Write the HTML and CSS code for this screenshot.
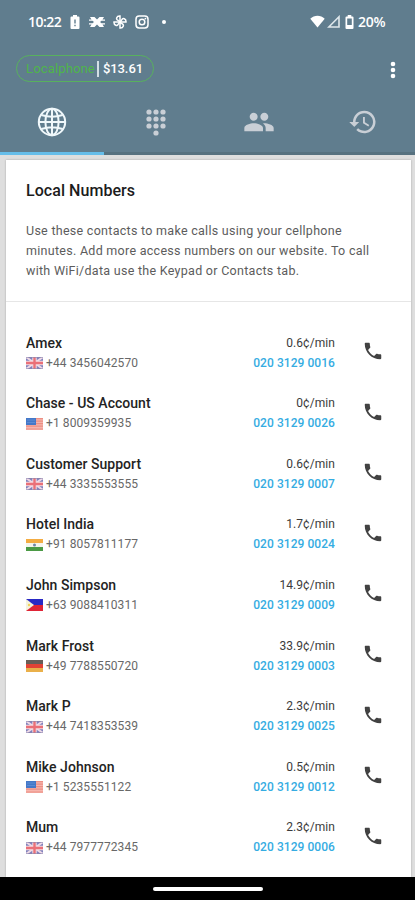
FILE: index.html
```html
<!DOCTYPE html>
<html lang="en">
<head>
<meta charset="utf-8">
<title>Local Numbers</title>
<link rel="stylesheet" href="styles.css">
</head>
<body>
<svg class="defs" width="0" height="0" aria-hidden="true">
  <symbol id="call" viewBox="0 0 24 24"><path d="M6.62 10.79c1.44 2.83 3.76 5.14 6.59 6.59l2.2-2.2c.27-.27.67-.36 1.02-.24 1.12.37 2.33.57 3.57.57.55 0 1 .45 1 1V20c0 .55-.45 1-1 1C10.610 21 3 13.390 3 4c0-.55.45-1 1-1h3.500c.55 0 1 .45 1 1 0 1.250.2 2.450.57 3.570.11.35.03.74-.25 1.020z"/></symbol>
  <symbol id="gb" viewBox="0 0 17 12"><rect width="17" height="12" fill="#7f80bc"/><path d="M0 0l17 12M17 0L0 12" stroke="#eed9e6" stroke-width="2"/><path d="M8.500 0v12M0 6h17" stroke="#f4dde3" stroke-width="4.400"/><path d="M8.500 0v12M0 6h17" stroke="#ea7078" stroke-width="2.400"/><path d="M0 .5h17M0 11.500h17" stroke="#8c86ac" stroke-opacity=".6"/></symbol>
  <symbol id="us" viewBox="0 0 17 12"><rect width="17" height="12" fill="#f7b5ad"/><path d="M0 .7h17M0 3.200h17M0 5.700h17M0 8.200h17M0 11h17" stroke="#ec8f84" stroke-width="1.200"/><rect width="10" height="7" fill="#4478c8"/><path d="M1.500 2h7M1.500 4.500h7" stroke="#82a9e2" stroke-width=".8" stroke-dasharray="1 1"/></symbol>
  <symbol id="in" viewBox="0 0 17 12"><rect width="17" height="12" fill="#f5f5ed"/><rect width="17" height="4" fill="#f4ac42"/><rect y="8" width="17" height="4" fill="#4b9a45"/><circle cx="8.500" cy="6" r="1.500" fill="#7186a5"/></symbol>
  <symbol id="ph" viewBox="0 0 17 12"><rect width="17" height="6" fill="#2929c5"/><rect y="6" width="17" height="6" fill="#e02436"/><path d="M0 0l8 6-8 6z" fill="#f5f3dc"/><circle cx="3" cy="6" r="1.200" fill="#f1d35b"/></symbol>
  <symbol id="de" viewBox="0 0 17 12"><rect width="17" height="4" fill="#685e57"/><rect y="4" width="17" height="4" fill="#e24335"/><rect y="8" width="17" height="4" fill="#eab04a"/></symbol>
</svg>
<div class="screen">
  <header class="header">
    <div class="status">
      <span class="time">10:22</span>
      <svg class="s-battery" viewBox="0 0 10 14"><path fill="#fff" fill-rule="evenodd" d="M3 0h4v1.500h1.500Q9.500 1.500 9.500 2.500V13q0 1-1 1h-7q-1 0-1-1V2.500q0-1 1-1H3zM4.300 4.500v4h1.400v-4zm0 5.300v1.500h1.400V9.800z"/></svg>
      <svg class="s-cross" viewBox="0 0 16 12"><path fill="#fff" d="M1 1h4.500L8 3.500 10.500 1H15l-1.500 2.500H16v1.200h-3.500L11 6l1.500 1.300H16v1.200h-2.500L15 11h-4.500L8 8.500 5.500 11H1l1.500-2.500H0V7.300h3.500L5 6 3.500 4.700H0V3.500h2.500z"/></svg>
      <svg class="s-fan" viewBox="0 0 14 14"><g fill="none" stroke="#fff" stroke-width="1.500"><path id="blade" d="M7 7V1C3.500.7 2.500 4.500 5 5.300L7 7"/><use href="#blade" transform="rotate(90 7 7)"/><use href="#blade" transform="rotate(180 7 7)"/><use href="#blade" transform="rotate(270 7 7)"/></g></svg>
      <svg class="s-insta" viewBox="0 0 14 14"><g fill="none" stroke="#fff" stroke-width="1.500"><rect x="1" y="1" width="12" height="12" rx="3.200"/><circle cx="7" cy="7" r="2.800"/></g><circle cx="10.400" cy="3.600" r=".9" fill="#fff"/></svg>
      <span class="s-dot"></span>
      <svg class="s-wifi" viewBox="0 0 16 13"><path fill="#fff" d="M8 13L.3 3.600C4.500-.8 11.500-.8 15.700 3.600z"/></svg>
      <svg class="s-signal" viewBox="0 0 13 13"><path fill="none" stroke="#dfe8ec" stroke-width="1.600" d="M12 1.800V12H1.800z"/></svg>
      <svg class="s-level" viewBox="0 0 9 14"><path fill="#fff" fill-rule="evenodd" d="M2.700 0h3.600v1.500h1.200q1 0 1 1V13q0 1-1 1h-6q-1 0-1-1V2.500q0-1 1-1h1.200zM2.200 3.500V10h4.600V3.500z"/></svg>
      <span class="percent">20%</span>
    </div>
    <div class="toolbar">
      <div class="balance"><span class="brand">Localphone</span><span class="bar"></span><span class="amount">$13.61</span></div>
      <svg class="more" viewBox="0 0 6 18"><g fill="#fff"><circle cx="3" cy="3" r="2.300"/><circle cx="3" cy="9" r="2.300"/><circle cx="3" cy="15" r="2.300"/></g></svg>
    </div>
    <nav class="tabs">
      <div class="tab active"><svg width="30" height="30" viewBox="0 0 30 30"><g fill="none" stroke="#f0f8fb" stroke-width="2"><circle cx="15" cy="15" r="13.200"/><ellipse cx="15" cy="15" rx="6.600" ry="13.200"/><path d="M15 2v26M2 15h26M4.300 8q10.700 3.500 21.400 0M4.300 22q10.700-3.500 21.400 0"/></g></svg></div>
      <div class="tab"><svg width="22" height="28" viewBox="0 0 22 28"><g fill="#c9cfd6"><circle cx="4" cy="4" r="2.600"/><circle cx="11" cy="4" r="2.600"/><circle cx="18" cy="4" r="2.600"/><circle cx="4" cy="11" r="2.600"/><circle cx="11" cy="11" r="2.600"/><circle cx="18" cy="11" r="2.600"/><circle cx="4" cy="18" r="2.600"/><circle cx="11" cy="18" r="2.600"/><circle cx="18" cy="18" r="2.600"/><circle cx="11" cy="25" r="2.600"/></g></svg></div>
      <div class="tab"><svg width="32" height="32" viewBox="0 0 24 24"><path fill="#c9cfd6" d="M16 11c1.660 0 2.990-1.340 2.990-3S17.660 5 16 5s-3 1.340-3 3 1.340 3 3 3zm-8 0c1.660 0 2.990-1.340 2.990-3S9.660 5 8 5 5 6.340 5 8s1.340 3 3 3zm0 2c-2.330 0-7 1.170-7 3.500V19h14v-2.500C15 14.170 10.330 13 8 13zm8 0c-.29 0-.62.02-.97.05C16.190 13.890 17 15.020 17 16.500V19h6v-2.500c0-2.330-4.670-3.500-7-3.500z"/></svg></div>
      <div class="tab"><svg width="30" height="30" viewBox="0 0 24 24"><path fill="#c9cfd6" d="M13 3a9 9 0 0 0-9 9H1l3.890 3.890.07.14L9 12H6a7 7 0 1 1 2.060 4.940l-1.420 1.420A9 9 0 1 0 13 3zm-1 5v5l4.280 2.540.72-1.210-3.500-2.080V8z"/></svg></div>
    </nav>
  </header>
  <main class="content">
    <section class="card">
      <div class="intro">
        <h1>Local Numbers</h1>
        <p>Use these contacts to make calls using your cellphone<br>minutes. Add more access numbers on our website. To call<br>with WiFi/data use the Keypad or Contacts tab.</p>
      </div>
      <ul class="list">
        <li class="row"><div class="who"><b>Amex</b><span class="phone"><svg class="flag"><use href="#gb"/></svg>+44 3456042570</span></div><div class="rate"><span>0.6¢/min</span><a>020 3129 0016</a></div><svg class="call"><use href="#call"/></svg></li>
        <li class="row"><div class="who"><b>Chase - US Account</b><span class="phone"><svg class="flag"><use href="#us"/></svg>+1 8009359935</span></div><div class="rate"><span>0¢/min</span><a>020 3129 0026</a></div><svg class="call"><use href="#call"/></svg></li>
        <li class="row"><div class="who"><b>Customer Support</b><span class="phone"><svg class="flag"><use href="#gb"/></svg>+44 3335553555</span></div><div class="rate"><span>0.6¢/min</span><a>020 3129 0007</a></div><svg class="call"><use href="#call"/></svg></li>
        <li class="row"><div class="who"><b>Hotel India</b><span class="phone"><svg class="flag"><use href="#in"/></svg>+91 8057811177</span></div><div class="rate"><span>1.7¢/min</span><a>020 3129 0024</a></div><svg class="call"><use href="#call"/></svg></li>
        <li class="row"><div class="who"><b>John Simpson</b><span class="phone"><svg class="flag"><use href="#ph"/></svg>+63 9088410311</span></div><div class="rate"><span>14.9¢/min</span><a>020 3129 0009</a></div><svg class="call"><use href="#call"/></svg></li>
        <li class="row"><div class="who"><b>Mark Frost</b><span class="phone"><svg class="flag"><use href="#de"/></svg>+49 7788550720</span></div><div class="rate"><span>33.9¢/min</span><a>020 3129 0003</a></div><svg class="call"><use href="#call"/></svg></li>
        <li class="row"><div class="who"><b>Mark P</b><span class="phone"><svg class="flag"><use href="#gb"/></svg>+44 7418353539</span></div><div class="rate"><span>2.3¢/min</span><a>020 3129 0025</a></div><svg class="call"><use href="#call"/></svg></li>
        <li class="row"><div class="who"><b>Mike Johnson</b><span class="phone"><svg class="flag"><use href="#us"/></svg>+1 5235551122</span></div><div class="rate"><span>0.5¢/min</span><a>020 3129 0012</a></div><svg class="call"><use href="#call"/></svg></li>
        <li class="row"><div class="who"><b>Mum</b><span class="phone"><svg class="flag"><use href="#gb"/></svg>+44 7977772345</span></div><div class="rate"><span>2.3¢/min</span><a>020 3129 0006</a></div><svg class="call"><use href="#call"/></svg></li>
      </ul>
    </section>
  </main>
  <footer class="navbar"><span class="handle"></span></footer>
</div>
</body>
</html>
```
FILE: styles.css
```css
* { box-sizing: border-box; }
body { margin: 0; font-family: Roboto, "Liberation Sans", sans-serif; }
svg { display: block; flex: none; }
.defs { position: absolute; }
.screen { width: 415px; height: 900px; display: flex; flex-direction: column; overflow: hidden; background: #dedede; }
.header { height: 155px; flex: none; background: #607d8e; color: #fff; display: flex; flex-direction: column; }
.status { height: 43px; flex: none; padding: 0 28px; display: flex; align-items: center; }
.time, .percent { font-family: "Open Sans", sans-serif; font-size: 14px; line-height: 18px; font-weight: 600; white-space: nowrap; }
.time { width: 42px; letter-spacing: -0.5px; }
.s-battery { width: 10px; height: 14px; }
.s-cross { width: 16px; height: 12px; margin-left: 9px; }
.s-fan { width: 14px; height: 14px; margin-left: 8px; }
.s-insta { width: 14px; height: 14px; margin-left: 8px; }
.s-dot { width: 4px; height: 4px; border-radius: 2px; background: #fff; margin-left: 13px; }
.s-wifi { width: 15px; height: 13px; margin-left: auto; }
.s-signal { width: 13px; height: 13px; margin-left: 2px; }
.s-level { width: 9px; height: 14px; margin-left: 5px; }
.percent { width: 33px; padding-left: 4px; letter-spacing: -0.2px; }
.toolbar { height: 52px; flex: none; display: flex; justify-content: space-between; align-items: center; padding: 0 19px 0 16px; }
.balance { height: 27px; width: 138px; border: 1.5px solid #58b15d; border-radius: 14px; display: flex; align-items: center; padding-left: 9px; margin-top: -1px; font-size: 13px; line-height: 18px; }
.brand { color: #4fb54b; width: 71px; letter-spacing: 0.15px; }
.bar { width: 2px; height: 16px; background: #d3dfe4; margin-right: 4px; }
.amount { font-weight: 500; letter-spacing: -0.1px; }
.more { width: 6px; height: 18px; margin-top: 1px; }
.tabs { flex: 1; display: flex; }
.tab { flex: 1; display: flex; align-items: center; justify-content: center; padding-bottom: 3px; border-bottom: 3px solid #56717f; }
.tab.active { border-color: #65bde9; }
.content { flex: 1; min-height: 0; padding: 5px 4px 0 6px; display: flex; }
.card { flex: 1; background: #fff; box-shadow: 0 0 2px rgba(0, 0, 0, 0.25); overflow: hidden; }
.intro { height: 142px; padding: 20.5px 20px 0; border-bottom: 1px solid #e6e6e6; }
h1 { margin: 0; font-size: 16px; line-height: 20px; font-weight: 500; color: #1c1c1c; letter-spacing: 0.05px; }
p { margin: 20px 0 0; font-size: 12.5px; line-height: 20.4px; color: #5c5c5c; letter-spacing: 0.28px; white-space: nowrap; }
.list { list-style: none; margin: 0; padding: 20.6px 0 0; }
.row { height: 60.6px; padding: 10px 28px 0 20px; display: flex; }
.who, .rate { display: flex; flex-direction: column; }
.who { flex: 1; }
b { font-size: 14px; line-height: 20px; font-weight: 500; color: #232323; letter-spacing: 0.03px; }
.phone { display: flex; align-items: center; font-size: 12px; line-height: 21px; color: #686868; letter-spacing: 0.1px; }
.flag { width: 17px; height: 12px; margin-right: 3px; }
.rate { text-align: right; font-size: 12px; letter-spacing: 0.06px; margin-right: 26px; }
.rate span { line-height: 20px; color: #3b3b3b; }
.rate a { line-height: 21px; font-weight: 500; color: #35ace2; }
.call { width: 22px; height: 22px; margin: 7.500px -0.500px 0 0.500px; fill: #424242; }
.navbar { height: 23px; flex: none; background: #000; display: flex; justify-content: center; align-items: center; }
.handle { width: 110px; height: 4px; border-radius: 2px; background: #fff; }
```
